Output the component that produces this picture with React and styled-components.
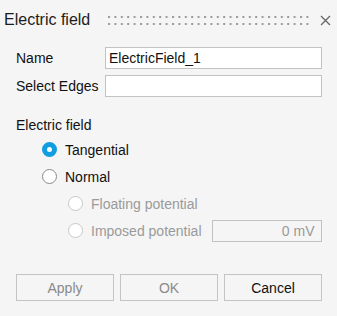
import React from 'react';
import styled, { createGlobalStyle } from 'styled-components';

const GlobalStyle = createGlobalStyle`
  html, body {
    margin: 0;
    padding: 0;
    background: #f5f5f5;
  }
  body {
    font-family: "Liberation Sans", Arial, sans-serif;
    color: #111;
  }
`;

const Dialog = styled.div`
  width: 337px;
  height: 316px;
  background: #f5f5f5;
  box-sizing: border-box;
`;

const Header = styled.div`
  display: flex;
  align-items: center;
  height: 40px;
  padding: 0 6px 0 4px;
`;

const Title = styled.div`
  font-size: 16px;
  color: #1c1c1c;
  white-space: nowrap;
`;

const Grip = styled.svg`
  flex: 1;
  height: 10px;
  margin: 0 8px 0 18px;
`;

const CloseButton = styled.button`
  display: flex;
  align-items: center;
  justify-content: center;
  width: 12px;
  height: 12px;
  padding: 0;
  border: 0;
  background: none;
`;

const Fields = styled.div`
  display: grid;
  grid-template-columns: 89px 1fr;
  row-gap: 6px;
  align-items: center;
  padding: 7px 15px 0 16px;
  font-size: 14px;
`;

const Input = styled.input`
  box-sizing: border-box;
  width: ${p => p.width || '100%'};
  height: 22px;
  margin: 0;
  padding: 0 ${p => (p.right ? '6px' : '3px')};
  border: 1px solid #c2c2c2;
  background: ${p => (p.disabled ? '#f5f5f5' : '#fff')};
  font: 14px "Liberation Sans", Arial, sans-serif;
  color: ${p => (p.disabled ? '#999' : '#111')};
  text-align: ${p => (p.right ? 'right' : 'left')};
  outline: none;
  &:disabled {
    -webkit-text-fill-color: #999;
  }
`;

const Section = styled.div`
  padding: 20px 15px 0 16px;
  font-size: 14px;
`;

const SectionLabel = styled.div`
  line-height: 16px;
  margin-bottom: 3px;
`;

const RadioRow = styled.label`
  display: flex;
  align-items: center;
  height: 27px;
  padding-left: ${p => p.indent}px;
  color: ${p => (p.disabled ? '#9a9a9a' : '#111')};
`;

const RadioDot = styled.span`
  box-sizing: border-box;
  width: 15px;
  height: 15px;
  margin-right: 8px;
  border-radius: 50%;
  flex-shrink: 0;
  background: #fff;
  border: ${p =>
    p.checked
      ? '5px solid #119de0'
      : p.disabled
      ? '1px solid #c8c8c8'
      : '1px solid #8a8a8a'};
`;

const RadioText = styled.span`
  white-space: nowrap;
`;

const Spacer = styled.span`
  width: 10px;
`;

const Buttons = styled.div`
  display: grid;
  grid-template-columns: repeat(3, 1fr);
  gap: 6px;
  padding: 30px 15px 0 16px;
`;

const Button = styled.button`
  box-sizing: border-box;
  height: 27px;
  margin: 0;
  border: 1px solid #c4c4c4;
  background: #f5f5f5;
  font: 14px "Liberation Sans", Arial, sans-serif;
  color: ${p => (p.muted ? '#8a8a8a' : '#111')};
`;

function Radio({ label, checked, disabled, indent, children }) {
  return (
    <RadioRow indent={indent} disabled={disabled}>
      <RadioDot checked={checked} disabled={disabled} />
      <RadioText>{label}</RadioText>
      {children}
    </RadioRow>
  );
}

export default function App() {
  return (
    <Dialog>
      <GlobalStyle />
      <Header>
        <Title>Electric field</Title>
        <Grip>
          <defs>
            <pattern id="grip" width="6.4" height="7" patternUnits="userSpaceOnUse">
              <rect x="0" y="1" width="2" height="2" fill="#9a9a9a" />
            </pattern>
          </defs>
          <rect width="100%" height="10" fill="url(#grip)" />
        </Grip>
        <CloseButton aria-label="close">
          <svg width="11" height="11" viewBox="0 0 11 11">
            <path d="M1 1L10 10M10 1L1 10" stroke="#6a6a6a" strokeWidth="1.4" fill="none" />
          </svg>
        </CloseButton>
      </Header>

      <Fields>
        <span>Name</span>
        <Input defaultValue="ElectricField_1" />
        <span>Select Edges</span>
        <Input defaultValue="" />
      </Fields>

      <Section>
        <SectionLabel>Electric field</SectionLabel>
        <Radio label="Tangential" checked indent={26} />
        <Radio label="Normal" indent={26} />
        <Radio label="Floating potential" disabled indent={52} />
        <Radio label="Imposed potential" disabled indent={52}>
          <Spacer />
          <Input disabled right width="110px" defaultValue="0 mV" />
        </Radio>
      </Section>

      <Buttons>
        <Button muted>Apply</Button>
        <Button muted>OK</Button>
        <Button>Cancel</Button>
      </Buttons>
    </Dialog>
  );
}
